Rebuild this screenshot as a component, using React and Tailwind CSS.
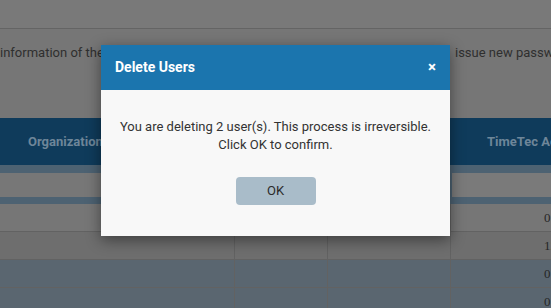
export default function App() {
  const rows = [
    { tone: "bg-[#767676]", value: "0" },
    { tone: "bg-[#6e6e6e]", value: "12" },
    { tone: "bg-[#5a6670]", value: "0" },
    { tone: "bg-[#5a6670]", value: "0" },
  ];

  return (
    <div className="relative h-[308px] w-[551px] overflow-hidden bg-[#767676] font-['Roboto',sans-serif]">
      {/* page behind the backdrop */}
      <div className="h-[29px] border-b border-[#646464] bg-[#797979]" />
      <div className="flex h-[89px] items-start pt-[15px] text-[13px] leading-[18px] text-[#2f2f2f]">
        <div className="w-[455px] shrink-0 overflow-hidden whitespace-nowrap">
          information of the selected users will be removed and you will need to
        </div>
        <div className="whitespace-nowrap">issue new passw</div>
      </div>

      <div className="flex h-[47px] bg-[#0f3b5b] text-[13px] font-bold text-[#6e8699]">
        <div className="flex w-[235px] shrink-0 items-center pl-[28px]">Organization</div>
        <div className="w-[93px] shrink-0" />
        <div className="w-[123px] shrink-0" />
        <div className="flex w-[100px] shrink-0 items-center overflow-hidden whitespace-nowrap pl-[36px]">
          TimeTec Ac
        </div>
      </div>

      <div className="flex h-[39px] items-center gap-[12px] bg-[#4d6272]">
        <div className="h-[24px] w-[440px] shrink-0 bg-[#777777]" />
        <div className="h-[24px] w-[160px] shrink-0 bg-[#7a7a7a]" />
      </div>

      {rows.map((r, i) => (
        <div
          key={i}
          className={`flex h-[28px] border-b border-[#626262] ${r.tone} font-['Liberation_Serif',serif] text-[13px] text-[#262626]`}
        >
          <div className="w-[235px] shrink-0 border-r border-[#626262]" />
          <div className="w-[93px] shrink-0 border-r border-[#626262]" />
          <div className="w-[123px] shrink-0 border-r border-[#626262]" />
          <div className="flex w-[100px] shrink-0 items-center overflow-hidden whitespace-nowrap pl-[93px]">
            {r.value}
          </div>
        </div>
      ))}

      {/* dialog */}
      <div className="absolute left-[101px] top-[45px] w-[349px] shadow-[0_4px_14px_rgba(0,0,0,0.45)]">
        <div className="flex h-[45px] items-center justify-between bg-[#1b75ae] px-[14px] text-white">
          <span className="text-[14px] font-bold">Delete Users</span>
          <span className="text-[15px] font-bold leading-none">×</span>
        </div>
        <div className="flex flex-col items-center bg-[#f8f8f8] pb-[31px] pt-[28px] text-center text-[13px] leading-[18px] text-[#333]">
          <p>
            You are deleting 2 user(s). This process is irreversible.
            <br />
            Click OK to confirm.
          </p>
          <button className="mt-[23px] h-[28px] w-[80px] rounded-[4px] bg-[#a9bcc9] text-[13px] text-[#2b2b2b]">
            OK
          </button>
        </div>
      </div>
    </div>
  );
}
